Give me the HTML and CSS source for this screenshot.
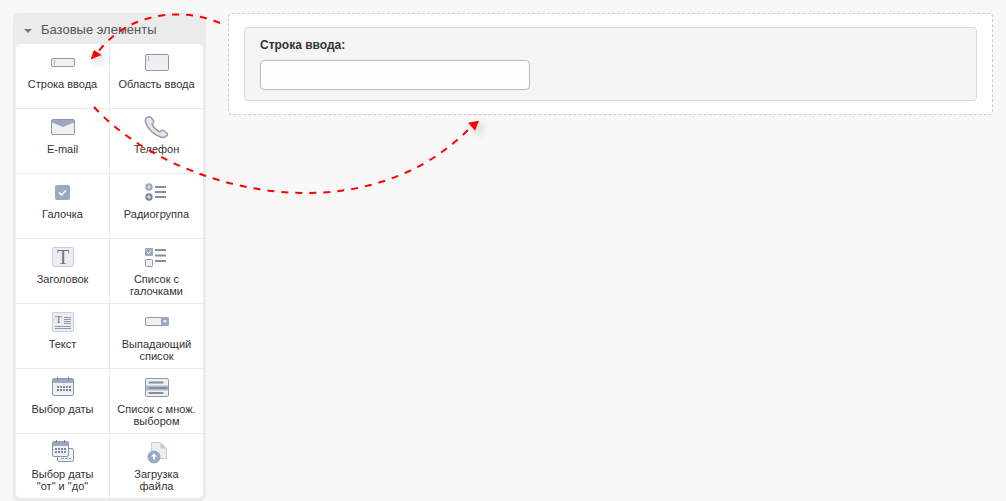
FILE: index.html
```html
<!DOCTYPE html>
<html lang="ru">
<head>
    <meta charset="UTF-8">
    <title>Конструктор формы</title>
    <link rel="stylesheet" href="styles.css">
</head>
<body>
    <div class="panel">
        <div class="panel-title"><span class="caret"></span>Базовые элементы</div>
        <div class="items">
            <div class="item">
                <svg class="icon" viewBox="0 0 33 28"><rect class="box" x="5.500" y="8.500" width="23" height="8" rx="1.500"/><path class="thin" d="M8.500 10v5"/></svg>
                <div class="item-name">Строка ввода</div>
            </div>
            <div class="item">
                <svg class="icon" viewBox="0 0 33 28"><rect class="box" x="5.500" y="4.500" width="23" height="16" rx="1.500"/><path class="thin" d="M8.500 6v5"/></svg>
                <div class="item-name">Область ввода</div>
            </div>
            <div class="item">
                <svg class="icon" viewBox="0 0 33 28"><rect class="box" x="5.500" y="4.500" width="23" height="15" rx="1.500"/><path class="solid" d="M6 5h22v2.500l-11 4.500-11-4.500z"/></svg>
                <div class="item-name">E-mail</div>
            </div>
            <div class="item">
                <svg class="icon" viewBox="0 0 33 28"><path class="phone" d="M7 2.500c-1.500 1-2 2.500-1.500 4.500 2 6.500 7.500 12 15 15 2 .8 4.500.5 6.500-1.500.7-.9.7-1.800-.2-2.500l-3.300-2.500c-.9-.6-1.800-.5-2.500.3l-1 1.100c-3.500-1.500-6.500-4.500-8-8l1.200-1.100c.7-.7.8-1.500.3-2.400L11 2.500c-.8-1-2.800-1-4 0z"/></svg>
                <div class="item-name">Телефон</div>
            </div>
            <div class="item">
                <svg class="icon" viewBox="0 0 33 28"><rect class="solid" x="9" y="5" width="15" height="15" rx="2"/><path class="tick" d="M13 12.500l2.500 2.500 4.500-4.500"/></svg>
                <div class="item-name">Галочка</div>
            </div>
            <div class="item">
                <svg class="icon" viewBox="0 0 33 28"><circle class="ring ring-light" cx="9" cy="7" r="2.700"/><circle class="ring" cx="9" cy="17" r="2.700"/><path class="rows" d="M15 7h11M15 12h11M15 17h11"/></svg>
                <div class="item-name">Радиогруппа</div>
            </div>
            <div class="item">
                <svg class="icon" viewBox="0 0 33 28"><rect class="pale" x="6.500" y="2.500" width="21" height="19" rx="1"/><text class="letter" x="17" y="18.500">T</text></svg>
                <div class="item-name">Заголовок</div>
            </div>
            <div class="item">
                <svg class="icon" viewBox="0 0 33 28"><rect class="solid" x="5" y="3" width="8" height="8" rx="1"/><path class="tick small" d="M7 7l1.500 1.500L11 5.500"/><rect class="box" x="5.500" y="14.500" width="7" height="7" rx="1"/><path class="rows" d="M15 5h11M15 10.500h11M15 16h11"/></svg>
                <div class="item-name">Список с<br>галочками</div>
            </div>
            <div class="item">
                <svg class="icon" viewBox="0 0 33 28"><rect class="pale" x="6.500" y="2.500" width="21" height="19" rx="1"/><text class="letter small-letter" x="12.500" y="13">T</text><path class="lines" d="M18 7.500h7M18 9.500h7M18 11.500h7M18 13.500h7M9 16.500h16M9 18.500h16"/></svg>
                <div class="item-name">Текст</div>
            </div>
            <div class="item">
                <svg class="icon" viewBox="0 0 33 28"><rect class="box" x="5.500" y="7.500" width="23" height="8" rx="1.500"/><path class="solid" d="M21 7h6.500A1.500 1.500 0 0 1 29 8.500v6a1.500 1.500 0 0 1-1.500 1.500H21z"/><path class="white" d="M23 10.500h4l-2 2.500z"/></svg>
                <div class="item-name">Выпадающий<br>список</div>
            </div>
            <div class="item">
                <svg class="icon" viewBox="0 0 33 28"><rect class="box" x="6.500" y="3.500" width="21" height="17" rx="1.500"/><path class="solid" d="M7 8V5a1.500 1.500 0 0 1 1.500-1.500h17A1.500 1.500 0 0 1 27 5v3z"/><path class="pins" d="M11.500 2v3M22.500 2v3"/><path class="dots" d="M11 12h14M11 15h14"/></svg>
                <div class="item-name">Выбор даты</div>
            </div>
            <div class="item">
                <svg class="icon" viewBox="0 0 33 28"><rect class="box" x="5.500" y="3.500" width="23" height="18" rx="1.500"/><path class="band" d="M6 10.500h22v5H6z"/><path class="rows" d="M8.500 7.500h15M8.500 13h19M8.500 18h15"/></svg>
                <div class="item-name">Список с множ.<br>выбором</div>
            </div>
            <div class="item">
                <svg class="icon" viewBox="0 0 33 28"><rect class="box" x="11.500" y="8.500" width="16" height="13" rx="1.500"/><path class="dark-line" d="M15 18.500h10"/><rect class="box" x="6.500" y="1.500" width="16" height="15" rx="1.500"/><path class="solid" d="M7 6V3a1.500 1.500 0 0 1 1.500-1.500h13A1.500 1.500 0 0 1 22 3v3z"/><path class="pins" d="M10.500 0v3M18.500 0v3"/><path class="dots" d="M9 9h11M9 12h11"/></svg>
                <div class="item-name">Выбор даты<br>"от" и "до"</div>
            </div>
            <div class="item">
                <svg class="icon" viewBox="0 0 33 28"><path class="paper" d="M11.500 2.500h9l6 6v10h-15z"/><path class="fold" d="M20.500 2.500v6h6"/><circle class="solid" cx="14" cy="17" r="6.500"/><path class="white" d="M14 13.500l3 3h-2v3h-2v-3h-2z"/></svg>
                <div class="item-name">Загрузка<br>файла</div>
            </div>
        </div>
    </div>

    <div class="drop-area">
        <div class="field">
            <label class="field-label" for="field-input">Строка ввода:</label>
            <input class="field-input" id="field-input" type="text">
        </div>
    </div>

    <svg class="arrows" viewBox="0 0 1006 501">
        <path class="arrow-line" d="M220 23C185 8 130 10 98 52"/>
        <polygon class="arrow-head" points="90.500,59.500 94,50 101.700,55"/>
        <path class="arrow-line" d="M94 107C170 190 360 240 470 128"/>
        <polygon class="arrow-head" points="479,120.700 468,122.700 475,130.700"/>
    </svg>
</body>
</html>
```

FILE: styles.css
```css
html, body {
    height: 100%;
}
body {
    display: flex;
    align-items: flex-start;
    gap: 22px;
    box-sizing: border-box;
    height: 501px;
    margin: 0;
    padding: 13px 13px 0;
    overflow: hidden;
    background-color: #f8f8f8;
    font-family: "Liberation Sans", Arial, sans-serif;
    color: #333;
}
.panel {
    flex: none;
    width: 193px;
    box-sizing: border-box;
    padding: 0 3px 3px;
    background-color: #ebebeb;
    border-radius: 6px;
}
.panel-title {
    display: flex;
    align-items: center;
    box-sizing: border-box;
    height: 31px;
    padding: 2px 0 0 8px;
    font-size: 13px;
    color: #555;
}
.caret {
    width: 0;
    height: 0;
    margin: 2px 9px 0 0;
    border-left: 4px solid transparent;
    border-right: 4px solid transparent;
    border-top: 4px solid #777;
}
.items {
    display: grid;
    grid-template-columns: 94px 93px;
    grid-template-rows: repeat(6, 65px) 64px;
    background-color: #fff;
    border-radius: 5px;
}
.item {
    box-sizing: border-box;
    padding-top: 6px;
    text-align: center;
    border-bottom: 1px solid #ebebeb;
}
.item:nth-child(odd) {
    border-right: 1px solid #ebebeb;
}
.item:nth-last-child(-n+2) {
    border-bottom: none;
}
.icon {
    display: block;
    width: 33px;
    height: 28px;
    margin: 0 auto;
}
.item-name {
    font-size: 11px;
    line-height: 12px;
    color: #333;
}

/* иконки */
.box {
    fill: #eef0f3;
    stroke: #8f98ab;
}
.thin {
    fill: none;
    stroke: #a9b1c1;
}
.solid {
    fill: #9ba8c0;
}
.white {
    fill: #fff;
}
.tick {
    fill: none;
    stroke: #fff;
    stroke-width: 1.500;
}
.tick.small {
    stroke-width: 1;
}
.phone {
    fill: #e6e8ec;
    stroke: #949cad;
    stroke-width: 1.500;
}
.ring {
    fill: #d5dae3;
    stroke: #7d879b;
    stroke-width: 2;
}
.ring-light {
    stroke: #9ba8c0;
}
.rows {
    fill: none;
    stroke: #868fa2;
    stroke-width: 2;
}
.pins {
    fill: none;
    stroke: #7d879b;
    stroke-width: 1;
}
.pale {
    fill: #ebedf1;
    stroke: #c8cedb;
}
.letter {
    font-family: "Liberation Serif", serif;
    font-size: 20px;
    fill: #6b7487;
    text-anchor: middle;
}
.small-letter {
    font-size: 11px;
}
.lines {
    fill: none;
    stroke: #8f98ab;
    stroke-width: 1;
}
.dots {
    fill: none;
    stroke: #7d879b;
    stroke-width: 2;
    stroke-dasharray: 2 1;
}
.dark-line {
    fill: none;
    stroke: #8f98ab;
    stroke-width: 1;
    stroke-dasharray: 3 1;
}
.band {
    fill: #b0bacd;
}
.paper {
    fill: #eceef2;
    stroke: #c3c9d5;
}
.fold {
    fill: #c3c9d5;
}

/* форма */
.drop-area {
    flex: 1;
    box-sizing: border-box;
    height: 102px;
    padding: 13px 15px 0;
    background-color: #fff;
    border: 1px dashed #ccc;
    border-radius: 4px;
}
.field {
    box-sizing: border-box;
    height: 74px;
    padding: 10px 15px;
    background-color: #f5f5f5;
    border: 1px solid #d9d9d9;
    border-radius: 4px;
}
.field-label {
    display: block;
    margin-bottom: 8px;
    font-size: 12px;
    line-height: 14px;
    font-weight: bold;
    color: #333;
}
.field-input {
    display: block;
    box-sizing: border-box;
    width: 270px;
    height: 30px;
    background-color: #fdfdfd;
    border: 1px solid #bbb;
    border-radius: 4px;
}

/* стрелки поверх всего */
.arrows {
    position: absolute;
    top: 0;
    left: 0;
    width: 1006px;
    height: 501px;
    pointer-events: none;
}
.arrow-line {
    fill: none;
    stroke: #f00;
    stroke-width: 2;
    stroke-dasharray: 7 7;
}
.arrow-head {
    fill: #f00;
    filter: drop-shadow(4px 4px 4px rgba(0,0,0,0.25));
}
```
